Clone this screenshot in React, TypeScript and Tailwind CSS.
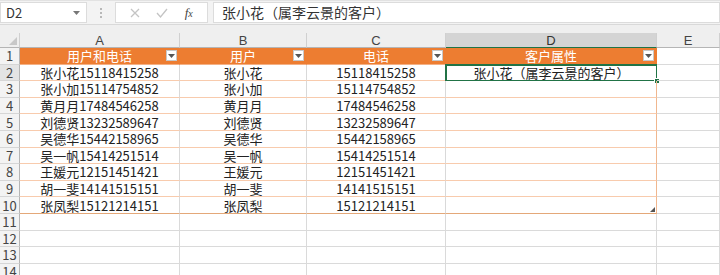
import React from 'react'

const rows = [
  ['张小花15118415258', '张小花', '15118415258'],
  ['张小加15114754852', '张小加', '15114754852'],
  ['黄月月17484546258', '黄月月', '17484546258'],
  ['刘德贤13232589647', '刘德贤', '13232589647'],
  ['吴德华15442158965', '吴德华', '15442158965'],
  ['吴一帆15414251514', '吴一帆', '15414251514'],
  ['王媛元12151451421', '王媛元', '12151451421'],
  ['胡一斐14141515151', '胡一斐', '14141515151'],
  ['张凤梨15121214151', '张凤梨', '15121214151'],
]

const cols = ['A', 'B', 'C', 'D', 'E']

const FilterBtn = () => (
  <div className="absolute right-[2px] top-[2px] w-[11px] h-[11px] bg-white border border-[#c8c8c8] flex items-center justify-center">
    <svg width="7" height="4" viewBox="0 0 7 4">
      <path d="M0 0h7L3.5 4z" fill="#555" />
    </svg>
  </div>
)

const Cell = ({ children, className = '' }: { children?: React.ReactNode; className?: string }) => (
  <div className={`relative h-[16.6px] flex items-center justify-center border-r border-b text-[13px] leading-none text-[#222] whitespace-nowrap ${className}`}>
    {children}
  </div>
)

const RowHead = ({ n }: { n: number }) => (
  <div className={`h-[16.6px] flex items-center justify-center border-r border-b border-r-[#b5b5b5] border-b-[#d6d6d6] text-[13px] leading-none text-[#444] ${n === 2 ? 'bg-[#e4e4e4]' : 'bg-[#f3f3f3]'}`}>
    {n}
  </div>
)

export default function App() {
  return (
    <div className="w-[720px] h-[275px] overflow-hidden bg-white font-['Noto_Sans_CJK_SC',sans-serif]">
      {/* formula bar */}
      <div className="h-[25px] flex items-stretch bg-[#f3f3f3] border-t border-[#e2e2e2] border-b border-b-[#d9d9d9] py-[1px]">
        <div className="w-[87px] bg-white border border-[#dcdcdc] flex items-center justify-between pl-[5px] pr-[6px]">
          <span className="text-[13px] text-[#333]">D2</span>
          <svg width="7" height="4" viewBox="0 0 7 4">
            <path d="M0 0h7L3.5 4z" fill="#777" />
          </svg>
        </div>
        <div className="w-[28px] flex flex-col items-center justify-center gap-[2px]">
          <span className="w-[2px] h-[2px] bg-[#b8b8b8]" />
          <span className="w-[2px] h-[2px] bg-[#b8b8b8]" />
          <span className="w-[2px] h-[2px] bg-[#b8b8b8]" />
        </div>
        <div className="w-[93px] bg-white border border-[#dcdcdc] flex items-center justify-around px-[6px]">
          <svg width="10" height="10" viewBox="0 0 10 10">
            <path d="M1 1l8 8M9 1l-8 8" stroke="#c4c4c4" strokeWidth="1.3" />
          </svg>
          <svg width="12" height="10" viewBox="0 0 12 10">
            <path d="M1 5l3.5 4L11 1" stroke="#c4c4c4" strokeWidth="1.3" fill="none" />
          </svg>
          <span className="font-['Liberation_Serif',serif] italic text-[13px] text-[#444]">
            f<span className="text-[10px]">x</span>
          </span>
        </div>
        <div className="w-[5px]" />
        <div className="flex-1 bg-white border border-[#dcdcdc] flex items-center pl-[8px]">
          <span className="text-[14px] text-[#333]">张小花（属李云景的客户）</span>
        </div>
      </div>
      <div className="h-[8px] bg-[#efefef]" />

      {/* sheet */}
      <div className="grid grid-cols-[20px_160px_127px_139px_211px_63px]">
        <div className="h-[15px] bg-[#efefef] border-r border-b border-r-[#d0d0d0] border-b-[#b5b5b5] relative">
          <svg className="absolute right-[2px] bottom-[2px]" width="8" height="8" viewBox="0 0 8 8">
            <path d="M8 0v8H0z" fill="#c8c8c8" />
          </svg>
        </div>
        {cols.map((c) => (
          <div
            key={c}
            className={`h-[15px] flex items-center justify-center border-r border-b border-r-[#d0d0d0] text-[13px] leading-none font-['Liberation_Sans',sans-serif] ${
              c === 'D' ? 'bg-[#d4d4d4] text-[#333] border-b-[#217346]' : 'bg-[#efefef] text-[#444] border-b-[#b5b5b5]'
            }`}
          >
            {c}
          </div>
        ))}

        {/* row 1: table header */}
        <RowHead n={1} />
        {['用户和电话', '用户', '电话', '客户属性'].map((h) => (
          <Cell key={h} className="bg-[#ed7d31] text-white border-r-[#ed7d31] border-b-[#f4b084]">
            {h}
            <FilterBtn />
          </Cell>
        ))}
        <Cell className="border-r-[#dadada] border-b-[#dadada]" />

        {/* rows 2-10 */}
        {rows.map((r, i) => {
          const n = i + 2
          const last = n === 10
          const bb = last ? 'border-b-[#e4a879]' : 'border-b-[#f8cbad]'
          return (
            <React.Fragment key={n}>
              <RowHead n={n} />
              <Cell className={`border-r-[#d9d9d9] ${bb}`}>{r[0]}</Cell>
              <Cell className={`border-r-[#d9d9d9] ${bb}`}>{r[1]}</Cell>
              <Cell className={`border-r-[#d9d9d9] ${bb}`}>{r[2]}</Cell>
              {n === 2 ? (
                <Cell className="border-2 border-[#217346] -mt-[1px] -ml-[1px] h-[17.6px]">
                  张小花（属李云景的客户）
                  <span className="absolute -right-[4px] -bottom-[4px] w-[6px] h-[6px] bg-[#217346] border border-white" />
                </Cell>
              ) : (
                <Cell className={`border-r-[#f0b78f] ${bb}`}>
                  {last && (
                    <svg className="absolute right-[1px] bottom-[1px]" width="5" height="5" viewBox="0 0 5 5">
                      <path d="M5 0v5H0z" fill="#555" />
                    </svg>
                  )}
                </Cell>
              )}
              <Cell className="border-r-[#dadada] border-b-[#dadada]" />
            </React.Fragment>
          )
        })}

        {/* empty rows 11-14 */}
        {[11, 12, 13, 14].map((n) => (
          <React.Fragment key={n}>
            <RowHead n={n} />
            {cols.map((c) => (
              <Cell key={c} className="border-r-[#dadada] border-b-[#dadada]" />
            ))}
          </React.Fragment>
        ))}
      </div>
    </div>
  )
}
